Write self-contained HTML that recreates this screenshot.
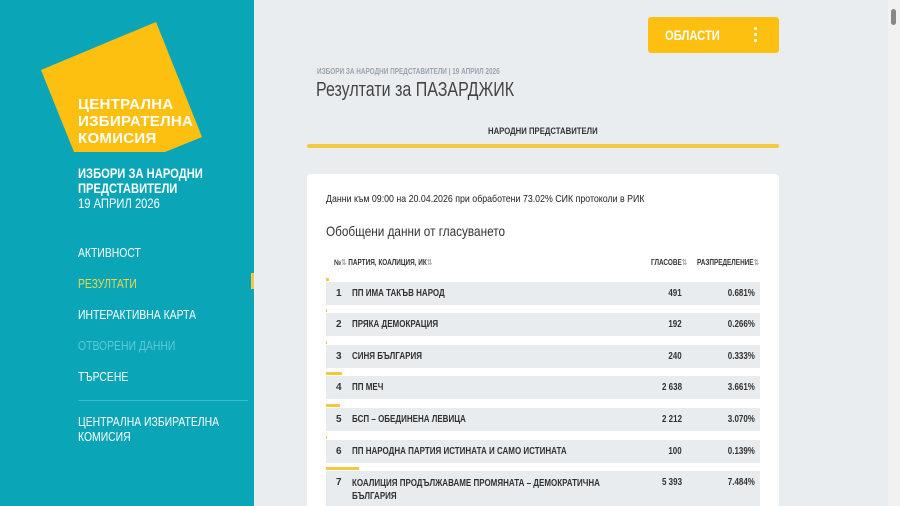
<!DOCTYPE html>
<html><head><meta charset="utf-8"><style>
*{margin:0;padding:0;box-sizing:border-box}
html,body{width:900px;height:506px;overflow:hidden}
body{background:#eaedf0;font-family:"Liberation Sans",sans-serif;position:relative}
.c{display:inline-block;transform:scaleX(.8);transform-origin:left top;white-space:nowrap}
.cr{display:inline-block;transform:scaleX(.8);transform-origin:right top;white-space:nowrap}
.side{position:absolute;left:0;top:0;width:254px;height:506px;background:#0aa6b8}
.abs{position:absolute}
.nav{position:absolute;left:78px;font-size:13px;color:#fff;white-space:nowrap}
.card{position:absolute;left:307px;top:174px;width:472px;height:340px;background:#fff;border-radius:4px}
.row{position:absolute;left:326px;width:434px;height:23px;background:#e9ecef;font-size:10px;font-weight:bold;color:#333;overflow:hidden}
.row>span{position:absolute;top:6px}
.bar{position:absolute;left:326px;height:3px;background:#f5c842}
.sb{position:absolute;right:0;top:0;width:12px;height:506px;background:#f1f1f1}
</style></head><body>
<div class="side">
<svg class="abs" style="left:0;top:0" width="254" height="170"><polygon points="41,70 156,22 202,137 165,152 74,152" fill="#fdc010"/></svg>
<div class="abs" style="left:78px;top:96px;color:#fff;font-weight:bold;font-size:15px;line-height:17px;letter-spacing:0.3px">ЦЕНТРАЛНА<br>ИЗБИРАТЕЛНА<br>КОМИСИЯ</div>
<div class="abs" style="left:78px;top:166px;color:#fff;font-weight:bold;font-size:14px;line-height:15px"><span class="c">ИЗБОРИ ЗА НАРОДНИ<br>ПРЕДСТАВИТЕЛИ</span></div>
<div class="abs" style="left:78px;top:195px;color:#fff;font-size:14px"><span class="c">19 АПРИЛ 2026</span></div>
<div class="nav" style="top:245px"><span class="c">АКТИВНОСТ</span></div>
<div class="nav" style="top:276px;color:#e8d84a"><span class="c">РЕЗУЛТАТИ</span></div>
<div class="abs" style="left:251px;top:273px;width:3px;height:16px;background:#f5c842"></div>
<div class="nav" style="top:307px"><span class="c">ИНТЕРАКТИВНА КАРТА</span></div>
<div class="nav" style="top:338px;color:#5ec8d4"><span class="c">ОТВОРЕНИ ДАННИ</span></div>
<div class="nav" style="top:369px"><span class="c">ТЪРСЕНЕ</span></div>
<div class="abs" style="left:78px;top:400px;width:170px;height:1px;background:#3cbccb"></div>
<div class="nav" style="top:414px;line-height:15px"><span class="c">ЦЕНТРАЛНА ИЗБИРАТЕЛНА<br>КОМИСИЯ</span></div>
</div>
<div class="abs" style="left:648px;top:17px;width:131px;height:36px;background:#fdc010;border-radius:3px;color:#fff;font-weight:bold;font-size:14px">
<span class="abs" style="left:17px;top:10px"><span class="c">ОБЛАСТИ</span></span>
<span class="abs" style="left:106px;top:10px;width:3px;height:3px;background:#fff;border-radius:50%"></span>
<span class="abs" style="left:106px;top:16px;width:3px;height:3px;background:#fff;border-radius:50%"></span>
<span class="abs" style="left:106px;top:22px;width:3px;height:3px;background:#fff;border-radius:50%"></span>
</div>
<div class="abs" style="left:317px;top:67px;font-size:8px;font-weight:bold;color:#9aa3ab"><span class="c">ИЗБОРИ ЗА НАРОДНИ ПРЕДСТАВИТЕЛИ | 19 АПРИЛ 2026</span></div>
<div class="abs" style="left:316px;top:79px;font-size:20px;color:#444"><span class="c">Резултати за ПАЗАРДЖИК</span></div>
<div class="abs" style="left:488px;top:126px;font-size:9px;font-weight:bold;color:#333"><span class="c" style="transform:scaleX(.86)">НАРОДНИ ПРЕДСТАВИТЕЛИ</span></div>
<div class="abs" style="left:307px;top:144px;width:472px;height:4px;background:#f5c842;border-radius:2px"></div>
<div class="card"></div>
<div class="abs" style="left:326px;top:193px;font-size:10.5px;color:#222"><span class="c" style="transform:scaleX(.84)">Данни към 09:00 на 20.04.2026 при обработени 73.02% СИК протоколи в РИК</span></div>
<div class="abs" style="left:326px;top:223px;font-size:14px;color:#333"><span class="c" style="transform:scaleX(.84)">Обобщени данни от гласуването</span></div>
<div class="abs" style="left:334px;top:258px;font-size:8px;font-weight:bold;color:#333"><span class="c">№<span style="color:#aaa">⇅</span> ПАРТИЯ, КОАЛИЦИЯ, ИК<span style="color:#aaa">⇅</span></span></div>
<div class="abs" style="left:651px;top:258px;font-size:8px;font-weight:bold;color:#333"><span class="c">ГЛАСОВЕ<span style="color:#aaa">⇅</span></span></div>
<div class="abs" style="left:697px;top:258px;font-size:8px;font-weight:bold;color:#333"><span class="c">РАЗПРЕДЕЛЕНИЕ<span style="color:#aaa">⇅</span></span></div>

<div class="bar" style="top:278px;width:3px"></div>
<div class="row" style="top:282px"><span style="left:10px">1</span><span style="left:26px" class="c">ПП ИМА ТАКЪВ НАРОД</span><span style="right:78px" class="cr">491</span><span style="right:5px" class="cr">0.681%</span></div>
<div class="bar" style="top:309px;width:1px"></div>
<div class="row" style="top:313px"><span style="left:10px">2</span><span style="left:26px" class="c">ПРЯКА ДЕМОКРАЦИЯ</span><span style="right:78px" class="cr">192</span><span style="right:5px" class="cr">0.266%</span></div>
<div class="bar" style="top:341px;width:1px"></div>
<div class="row" style="top:345px"><span style="left:10px">3</span><span style="left:26px" class="c">СИНЯ БЪЛГАРИЯ</span><span style="right:78px" class="cr">240</span><span style="right:5px" class="cr">0.333%</span></div>
<div class="bar" style="top:372px;width:16px"></div>
<div class="row" style="top:376px"><span style="left:10px">4</span><span style="left:26px" class="c">ПП МЕЧ</span><span style="right:78px" class="cr">2 638</span><span style="right:5px" class="cr">3.661%</span></div>
<div class="bar" style="top:404px;width:14px"></div>
<div class="row" style="top:408px"><span style="left:10px">5</span><span style="left:26px" class="c">БСП – ОБЕДИНЕНА ЛЕВИЦА</span><span style="right:78px" class="cr">2 212</span><span style="right:5px" class="cr">3.070%</span></div>
<div class="bar" style="top:436px;width:1px"></div>
<div class="row" style="top:440px"><span style="left:10px">6</span><span style="left:26px" class="c">ПП НАРОДНА ПАРТИЯ ИСТИНАТА И САМО ИСТИНАТА</span><span style="right:78px" class="cr">100</span><span style="right:5px" class="cr">0.139%</span></div>
<div class="bar" style="top:467px;width:33px"></div>
<div class="row" style="top:471px;height:40px"><span style="left:10px">7</span><span style="left:26px;line-height:13px;top:6px" class="c">КОАЛИЦИЯ ПРОДЪЛЖАВАМЕ ПРОМЯНАТА – ДЕМОКРАТИЧНА<br>БЪЛГАРИЯ</span><span style="right:78px" class="cr">5 393</span><span style="right:5px" class="cr">7.484%</span></div>

<div class="sb"><div class="abs" style="left:3px;top:9px;width:5px;height:16px;background:#888;border-radius:3px"></div></div>
</body></html>
